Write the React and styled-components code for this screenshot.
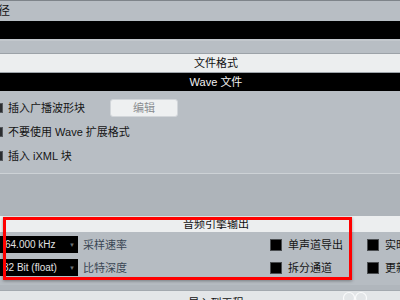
import React from "react";
import styled, { createGlobalStyle } from "styled-components";

const GlobalStyle = createGlobalStyle`
  html, body { margin: 0; padding: 0; }
  body {
    width: 400px;
    height: 300px;
    overflow: hidden;
    background: #b8bec4;
    font-family: "Liberation Sans", "Noto Sans CJK SC", sans-serif;
    font-size: 11px;
    color: #151515;
  }
`;

const Window = styled.div`
  position: relative;
  width: 400px;
  height: 300px;
  overflow: hidden;
  display: flex;
  flex-direction: column;
  background: #b8bec4;
`;

const TopEdge = styled.div`
  height: 1px;
  background: #7e848a;
  flex: none;
`;

const PathRow = styled.div`
  height: 20px;
  flex: none;
  display: flex;
  align-items: center;
  font-size: 12px;
  line-height: 12px;
  margin-left: -2px;
`;

const BlackBar = styled.div`
  height: 18px;
  flex: none;
  background: #000;
`;

const Spacer = styled.div`
  height: 15px;
  flex: none;
  box-sizing: border-box;
  box-shadow: inset 0 2px 0 #c3c8cd;
  border-bottom: 1px solid #9ca2a8;
`;

const SectionHeader = styled.div`
  flex: none;
  width: 432px;
  height: ${(p) => p.$h || 18}px;
  box-sizing: border-box;
  display: flex;
  justify-content: center;
  align-items: ${(p) => (p.$top ? "flex-start" : "center")};
  padding-top: ${(p) => p.$pt || 0}px;
  background: ${(p) => p.$bg || (p.$dark ? "#000" : "#eceeef")};
  color: ${(p) => (p.$dark ? "#f2f2f2" : "#111")};
  border-bottom: ${(p) => (p.$line ? "1px solid #9ea4aa" : "none")};
  line-height: 12px;
`;

const Options = styled.div`
  flex: none;
  padding: 5px 0;
  display: flex;
  flex-direction: column;
`;

const OptionRow = styled.div`
  height: 24px;
  display: grid;
  grid-template-columns: 3px 102px 68px;
  column-gap: 5px;
  align-items: center;
  line-height: 12px;
`;

const OptionText = styled.span`
  white-space: nowrap;
`;

const SmallBox = styled.span`
  width: 10px;
  height: 10px;
  margin-left: -7px;
  box-sizing: border-box;
  background: #2b2d30;
  border: 1px solid #55595e;
  display: block;
`;

const EditButton = styled.button`
  height: 18px;
  width: 68px;
  padding: 0;
  border: 1px solid #d2d6da;
  border-radius: 3px;
  background: #eef0f1;
  color: #8a8d90;
  font-family: inherit;
  font-size: 11px;
  line-height: 12px;
  margin-left: -5px;
`;

const Separator = styled.div`
  height: 1px;
  flex: none;
  background: #cdd2d6;
`;

const LowerArea = styled.div`
  height: 42px;
  flex: none;
  background: #aeb4ba;
`;

const AudioBody = styled.div`
  flex: none;
  height: 53px;
  padding-top: 4px;
  box-sizing: border-box;
  display: flex;
  flex-direction: column;
  gap: 6px;
  background: #b6bcc2;
`;

const AudioRow = styled.div`
  height: 17px;
  display: grid;
  grid-template-columns: 78px 192px 97px 1fr;
  align-items: center;
`;

const Dropdown = styled.div`
  height: 17px;
  background: #000;
  color: #e2e2e2;
  font-size: 10px;
  display: flex;
  align-items: center;
  justify-content: space-between;
  padding: 0 2px 0 ${(p) => p.$pl || 5}px;
  box-sizing: border-box;
  line-height: 12px;
`;

const Arrow = styled.span`
  color: #6c7075;
  font-size: 6px;
  line-height: 6px;
  margin-right: 1px;
`;

const FieldLabel = styled.span`
  padding-left: 5px;
  color: #3a4654;
  line-height: 12px;
`;

const CheckItem = styled.label`
  display: flex;
  align-items: center;
  gap: 6px;
  line-height: 12px;
  white-space: nowrap;
`;

const BlackBox = styled.span`
  width: 12px;
  height: 12px;
  box-sizing: border-box;
  background: #000;
  border: 1px solid #4a4d50;
  display: block;
  flex: none;
`;

const BottomGap = styled.div`
  height: 6px;
  flex: none;
  background: #b0b6bc;
  box-shadow: inset 0 -1px 0 #a3a9af;
`;

const RedFrame = styled.div`
  position: absolute;
  left: 3px;
  top: 217px;
  width: 349px;
  height: 63px;
  box-sizing: border-box;
  border: 3px solid #ff0000;
  box-shadow: 0 1px 3px rgba(0, 0, 0, 0.35);
  pointer-events: none;
`;

const Watermark = styled.svg`
  position: absolute;
  left: 342px;
  top: 290px;
`;

export default function App() {
  return (
    <>
      <GlobalStyle />
      <Window>
        <TopEdge />
        <PathRow>径</PathRow>
        <BlackBar />
        <Spacer />
        <SectionHeader $line $h={19}>文件格式</SectionHeader>
        <SectionHeader $dark $h={18}>Wave 文件</SectionHeader>
        <Options>
          <OptionRow>
            <SmallBox />
            <OptionText>插入广播波形块</OptionText>
            <EditButton>编辑</EditButton>
          </OptionRow>
          <OptionRow>
            <SmallBox />
            <OptionText>不要使用 Wave 扩展格式</OptionText>
          </OptionRow>
          <OptionRow>
            <SmallBox />
            <OptionText>插入 iXML 块</OptionText>
          </OptionRow>
        </Options>
        <Separator />
        <LowerArea />
        <SectionHeader $h={16}>音频引擎输出</SectionHeader>
        <AudioBody>
          <AudioRow>
            <Dropdown>
              <span>64.000 kHz</span>
              <Arrow>▼</Arrow>
            </Dropdown>
            <FieldLabel>采样速率</FieldLabel>
            <CheckItem>
              <BlackBox />
              单声道导出
            </CheckItem>
            <CheckItem>
              <BlackBox />
              实时导出
            </CheckItem>
          </AudioRow>
          <AudioRow>
            <Dropdown $pl={3}>
              <span>32 Bit (float)</span>
              <Arrow>▼</Arrow>
            </Dropdown>
            <FieldLabel>比特深度</FieldLabel>
            <CheckItem>
              <BlackBox />
              拆分通道
            </CheckItem>
            <CheckItem>
              <BlackBox />
              更新显示
            </CheckItem>
          </AudioRow>
        </AudioBody>
        <BottomGap />
        <SectionHeader $h={20} $top $pt={6} $bg="#e3e6e8">
          导入到工程
        </SectionHeader>
        <RedFrame />
        <Watermark width="28" height="14" viewBox="0 0 28 14">
          <circle cx="7" cy="8" r="5.5" fill="none" stroke="#ffffff" strokeOpacity="0.8" strokeWidth="1.2" />
          <circle cx="19" cy="8" r="5.5" fill="none" stroke="#ffffff" strokeOpacity="0.8" strokeWidth="1.2" />
        </Watermark>
      </Window>
    </>
  );
}
